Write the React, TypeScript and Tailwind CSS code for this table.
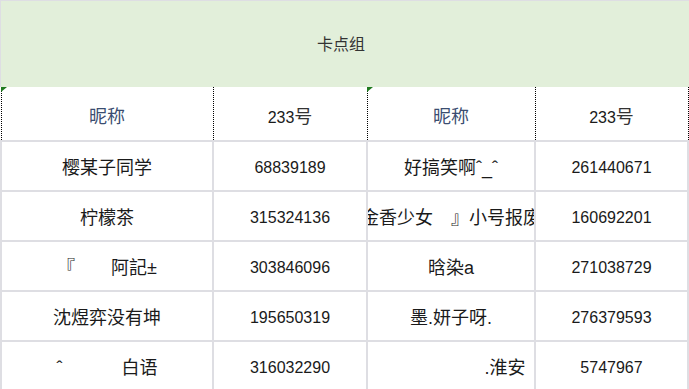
import React from "react";

const FONT = { fontFamily: '"Liberation Sans", "Noto Sans CJK SC", sans-serif' };

const rows: [string, string, string, string][] = [
  ["樱某子同学", "68839189", "好搞笑啊ˆ_ˆ", "261440671"],
  ["柠檬茶", "315324136", "金香少女　』小号报废", "160692201"],
  ["『　　阿記±", "303846096", "晗染a", "271038729"],
  ["沈煜弈没有坤", "195650319", "墨.妍子呀.", "276379593"],
  ["ˆ 　　　白语", "316032290", "　　　　　　.淮安", "5747967"],
];

// widths of the four columns (each includes its 2px left rule)
const widths = ["w-[212px]", "w-[154px]", "w-[168px]", "w-[153px]"];
const headWidths = ["w-[211px]", "w-[153px]", "w-[167px]", "w-[152px]"];

const Corner = () => (
  <svg className="absolute left-[-1px] top-0" width="6" height="5" viewBox="0 0 6 5">
    <polygon points="0,0 6,0 0,5" fill="#1f7a1f" />
  </svg>
);

const HeadCell = ({ i }: { i: number }) => (
  <div
    className={`relative ml-px ${headWidths[i]} h-full pt-2 border-l border-dotted border-black flex items-center justify-center`}
  >
    {(i === 0 || i === 2) && <Corner />}
    {i % 2 === 0 ? (
      <span className="text-[18px] text-[#3a4d70]">昵称</span>
    ) : (
      <span className="text-[16px] text-[#1a1a1a]">
        233<span className="text-[18px] text-[#333]">号</span>
      </span>
    )}
  </div>
);

export default function App() {
  return (
    <div className="w-[689px] h-[389px] overflow-hidden bg-white" style={FONT}>
      <div className="h-px bg-[#dedee3]" />
      <div className="h-[86px] pt-[2px] border-l border-[#dedee3] bg-[#e2efda] flex items-center justify-center">
        <span className="text-[16px] text-[#333] -ml-2">卡点组</span>
      </div>

      <div className="flex h-[53px]">
        {[0, 1, 2, 3].map((i) => (
          <HeadCell key={i} i={i} />
        ))}
        <div className="ml-px w-px h-full border-l border-dotted border-black" />
      </div>

      {rows.map((r, ri) => (
        <div key={ri} className="flex h-[50px] border-t-2 border-[#dedee3]">
          {r.map((v, ci) => (
            <div
              key={ci}
              className={`${widths[ci]} h-full pt-[4px] border-l-2 border-[#dedee3] flex items-center justify-center overflow-hidden whitespace-pre text-[#1a1a1a] ${
                ci % 2 === 0 ? "text-[18px]" : "text-[16px]"
              }`}
            >
              {v}
            </div>
          ))}
          <div className="w-[2px] h-full bg-[#dedee3]" />
        </div>
      ))}
    </div>
  );
}
